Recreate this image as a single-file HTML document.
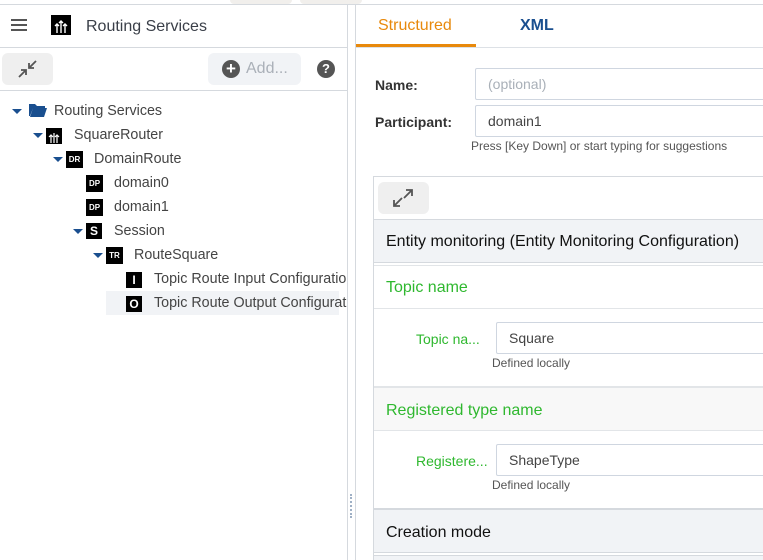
<!DOCTYPE html>
<html><head><style>
*{box-sizing:border-box;margin:0;padding:0}
body{width:763px;height:560px;overflow:hidden;background:#fff;font-family:"Liberation Sans",sans-serif;position:relative;color:#333}
.a{position:absolute}
.t{font-size:14.3px;color:#444;white-space:nowrap}
.ic{position:absolute;background:#000;color:#fff;font-size:8px;font-weight:bold;text-align:center;width:14px;height:14px;line-height:14px}
.tri{position:absolute;width:0;height:0;border-left:5px solid transparent;border-right:5px solid transparent;border-top:5px solid #1a4f8f}
.inp{position:absolute;border:1px solid #cfd6e0;border-radius:2px;background:#fff;font-size:14px;color:#444;padding-left:12px}
.hdr{position:absolute;left:374px;width:389px;font-size:16px;padding-left:12px}
</style></head><body>
<div class="a" style="left:0;top:4px;width:763px;height:1px;background:#d5d9de"></div>
<div class="a" style="left:230px;top:0;width:62px;height:4px;background:#f1efec;border-radius:0 0 6px 6px"></div>
<div class="a" style="left:300px;top:0;width:62px;height:4px;background:#f1efec;border-radius:0 0 6px 6px"></div>
<div class="a" style="left:347px;top:5px;width:1px;height:555px;background:#d5d9de"></div>
<div class="a" style="left:355px;top:5px;width:1px;height:555px;background:#d5d9de"></div>
<div class="a" style="left:350px;top:494px;width:2px;height:24px;border-left:2px dotted #9fb0c5"></div>
<!-- left header -->
<div class="a" style="left:11px;top:19px;width:16px;height:2px;background:#555;box-shadow:0 5px 0 #555,0 10px 0 #555"></div>
<div class="a" style="left:51px;top:15px;width:20px;height:20px;background:#000"><svg width="20" height="20"><path d="M10 18V7M6 18V10M14 18V10M4 11l2-2 2 2M12 11l2-2 2 2M8 8l2-2 2 2" stroke="#fff" stroke-width="1.4" fill="none"/></svg></div>
<div class="a" style="left:86px;top:18px;font-size:16px;color:#3a3f48">Routing Services</div>
<div class="a" style="left:0;top:47px;width:347px;height:1px;background:#d5d9de"></div>
<div class="a" style="left:2px;top:53px;width:51px;height:32px;background:#efefef;border-radius:6px"><svg width="51" height="32"><path d="M17 24l7-7M19 17h5v5M34 8l-7 7M32 15h-5v-5" stroke="#555" stroke-width="1.8" fill="none"/></svg></div>
<div class="a" style="left:208px;top:53px;width:93px;height:32px;background:#f1f3f6;border-radius:6px"></div>
<div class="a" style="left:222px;top:60px;width:18px;height:18px;border-radius:50%;background:#555;color:#fff;font-size:17px;line-height:18px;text-align:center;font-weight:bold">+</div>
<div class="a" style="left:246px;top:60px;font-size:16px;color:#aab0b8">Add...</div>
<div class="a" style="left:317px;top:60px;width:18px;height:18px;border-radius:50%;background:#555;color:#fff;font-size:13px;line-height:18px;text-align:center;font-weight:bold">?</div>
<div class="a" style="left:0;top:90px;width:347px;height:1px;background:#d5d9de"></div>
<!-- tree -->
<div class="tri" style="left:12px;top:109px"></div>
<svg class="a" style="left:29px;top:103px" width="18" height="14"><path d="M0 1h6l2 2h8v2H4L1 13H0z M4 5h14l-3 9H1z" fill="#1a4f8f"/></svg>
<div class="a t" style="left:54px;top:103px">Routing Services</div>
<div class="tri" style="left:33px;top:133px"></div>
<div class="ic" style="left:46px;top:128px;width:16px;height:16px"><svg width="16" height="16"><path d="M8 15V5M5 15V8M11 15V8M3 9l2-2 2 2M9 9l2-2 2 2" stroke="#fff" stroke-width="1.2" fill="none"/></svg></div>
<div class="a t" style="left:74px;top:127px">SquareRouter</div>
<div class="tri" style="left:53px;top:157px"></div>
<div class="ic" style="left:66px;top:151px;width:17px;height:17px;line-height:17px">DR</div>
<div class="a t" style="left:94px;top:151px">DomainRoute</div>
<div class="ic" style="left:86px;top:175px;width:17px;height:17px;line-height:17px">DP</div>
<div class="a t" style="left:114px;top:175px">domain0</div>
<div class="ic" style="left:86px;top:199px;width:17px;height:17px;line-height:17px">DP</div>
<div class="a t" style="left:114px;top:199px">domain1</div>
<div class="tri" style="left:73px;top:229px"></div>
<div class="ic" style="left:86px;top:223px;width:16px;height:16px;line-height:16px;font-size:12px">S</div>
<div class="a t" style="left:114px;top:223px">Session</div>
<div class="tri" style="left:93px;top:253px"></div>
<div class="ic" style="left:106px;top:247px;width:17px;height:17px;line-height:17px">TR</div>
<div class="a t" style="left:134px;top:247px">RouteSquare</div>
<div class="ic" style="left:126px;top:272px;width:16px;height:16px;line-height:16px;font-size:12px">I</div>
<div class="a t" style="left:154px;top:271px;width:193px;overflow:hidden">Topic Route Input Configuration</div>
<div class="a" style="left:106px;top:291px;width:233px;height:24px;background:#f1f3f6"></div>
<div class="ic" style="left:126px;top:296px;width:16px;height:16px;line-height:16px;font-size:12px">O</div>
<div class="a t" style="left:154px;top:295px;width:193px;overflow:hidden">Topic Route Output Configuration</div>
<!-- right -->
<div class="a" style="left:378px;top:17px;font-size:16px;color:#e8890c">Structured</div>
<div class="a" style="left:520px;top:17px;font-size:16px;color:#1a4f8f;font-weight:bold">XML</div>
<div class="a" style="left:356px;top:44px;width:120px;height:3px;background:#e8890c"></div>
<div class="a" style="left:356px;top:47px;width:407px;height:1px;background:#dde1e6"></div>
<div class="a" style="left:375px;top:77px;font-size:14px;font-weight:bold;color:#333">Name:</div>
<div class="inp" style="left:475px;top:68px;width:300px;height:32px;line-height:30px;color:#a9b0b8">(optional)</div>
<div class="a" style="left:375px;top:114px;font-size:14px;font-weight:bold;color:#333">Participant:</div>
<div class="inp" style="left:475px;top:105px;width:300px;height:32px;line-height:30px">domain1</div>
<div class="a" style="left:471px;top:139px;font-size:12px;color:#555">Press [Key Down] or start typing for suggestions</div>
<div class="a" style="left:373px;top:176px;width:400px;height:384px;border-left:1px solid #d5d9de;border-top:1px solid #d5d9de"></div>
<div class="a" style="left:378px;top:182px;width:51px;height:32px;background:#efefef;border-radius:6px"><svg width="51" height="32"><path d="M16 24l8-8M16 18v6h6M34 8l-8 8M28 8h6v6" stroke="#555" stroke-width="1.8" fill="none"/></svg></div>
<div class="hdr" style="top:219px;height:44px;line-height:44px;background:#f1f3f6;color:#111;border-top:1px solid #d5d9de;border-bottom:1px solid #d5d9de">Entity monitoring (Entity Monitoring Configuration)</div>
<div class="hdr" style="top:265px;height:44px;line-height:44px;color:#2fb82f;border-top:1px solid #e2e5e8;border-bottom:1px solid #e2e5e8">Topic name</div>
<div class="a" style="left:416px;top:331px;font-size:14px;color:#2fb82f">Topic na...</div>
<div class="inp" style="left:496px;top:322px;width:280px;height:32px;line-height:30px">Square</div>
<div class="a" style="left:492px;top:356px;font-size:12px;color:#555">Defined locally</div>
<div class="hdr" style="top:386px;height:45px;line-height:45px;background:#f8f8f8;color:#2fb82f;border-top:2px solid #e2e5e8;border-bottom:1px solid #e2e5e8">Registered type name</div>
<div class="a" style="left:416px;top:453px;font-size:14px;color:#2fb82f">Registere...</div>
<div class="inp" style="left:496px;top:444px;width:280px;height:32px;line-height:30px">ShapeType</div>
<div class="a" style="left:492px;top:478px;font-size:12px;color:#555">Defined locally</div>
<div class="hdr" style="top:508px;height:45px;line-height:45px;background:#f1f3f6;color:#111;border-top:2px solid #d5d9de;border-bottom:1px solid #d5d9de">Creation mode</div>
<div class="a" style="left:374px;top:555px;width:389px;height:5px;background:#f1f3f6;border-top:1px solid #d5d9de"></div>
</body></html>
